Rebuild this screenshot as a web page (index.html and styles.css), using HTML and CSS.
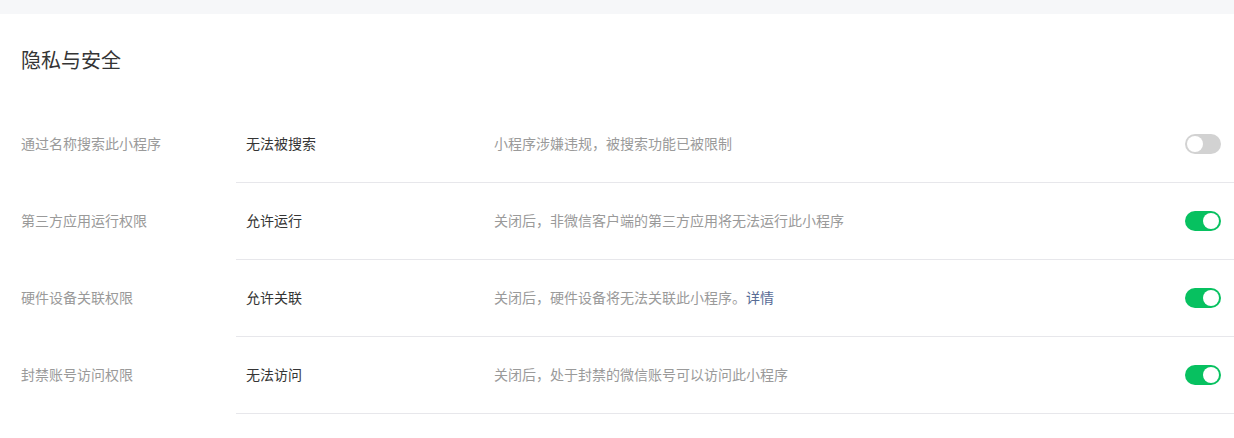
FILE: index.html
```html
<!DOCTYPE html>
<html lang="zh-CN">
<head>
<meta charset="utf-8">
<title>隐私与安全</title>
<link rel="stylesheet" href="styles.css">
</head>
<body>
<div class="topband"></div>
<section class="panel">
  <h2 class="title">隐私与安全</h2>
  <div class="list">
    <div class="row">
      <div class="label">通过名称搜索此小程序</div>
      <div class="body">
        <div class="state">无法被搜索</div>
        <div class="desc">小程序涉嫌违规，被搜索功能已被限制</div>
        <span class="switch off"><span class="knob"></span></span>
      </div>
    </div>
    <div class="row">
      <div class="label">第三方应用运行权限</div>
      <div class="body">
        <div class="state">允许运行</div>
        <div class="desc">关闭后，非微信客户端的第三方应用将无法运行此小程序</div>
        <span class="switch on"><span class="knob"></span></span>
      </div>
    </div>
    <div class="row">
      <div class="label">硬件设备关联权限</div>
      <div class="body">
        <div class="state">允许关联</div>
        <div class="desc">关闭后，硬件设备将无法关联此小程序。<a class="link" href="#">详情</a></div>
        <span class="switch on"><span class="knob"></span></span>
      </div>
    </div>
    <div class="row">
      <div class="label">封禁账号访问权限</div>
      <div class="body">
        <div class="state">无法访问</div>
        <div class="desc">关闭后，处于封禁的微信账号可以访问此小程序</div>
        <span class="switch on"><span class="knob"></span></span>
      </div>
    </div>
  </div>
</section>
</body>
</html>
```
FILE: styles.css
```css
* { box-sizing: border-box; }
html, body { margin: 0; padding: 0; background: #fff; }
body {
  font-family: "Noto Sans CJK SC", "Noto Sans", sans-serif;
  font-size: 14px;
  color: #353535;
}
.topband { height: 14px; background: #f6f7f9; }
.panel { padding: 0 0 0 21px; }
.title {
  margin: 0;
  padding-top: 32px;
  height: 92px;
  font-size: 20px;
  line-height: 28px;
  font-weight: 400;
  color: #353535;
}
.row { display: flex; height: 77px; }
.label {
  width: 215px;
  flex: none;
  display: flex;
  align-items: center;
  padding-bottom: 4px;
  color: #9a9a9a;
}
.body {
  flex: 1;
  display: flex;
  align-items: center;
  padding: 0 13px 0 10px;
  border-bottom: 1px solid #e7e7eb;
}
.state { width: 248px; flex: none; color: #353535; padding-bottom: 3px; }
.desc { flex: 1; color: #9a9a9a; padding-bottom: 3px; }
.link { color: #576b95; text-decoration: none; }
.switch {
  position: relative;
  width: 36px;
  height: 20px;
  border-radius: 10px;
  flex: none;
}
.switch.on { background: #07c160; }
.switch.off { background: #d2d2d2; }
.knob {
  position: absolute;
  top: 2px;
  width: 16px;
  height: 16px;
  border-radius: 50%;
  background: #fff;
}
.switch.on .knob { right: 2px; }
.switch.off .knob { left: 2px; }
```
